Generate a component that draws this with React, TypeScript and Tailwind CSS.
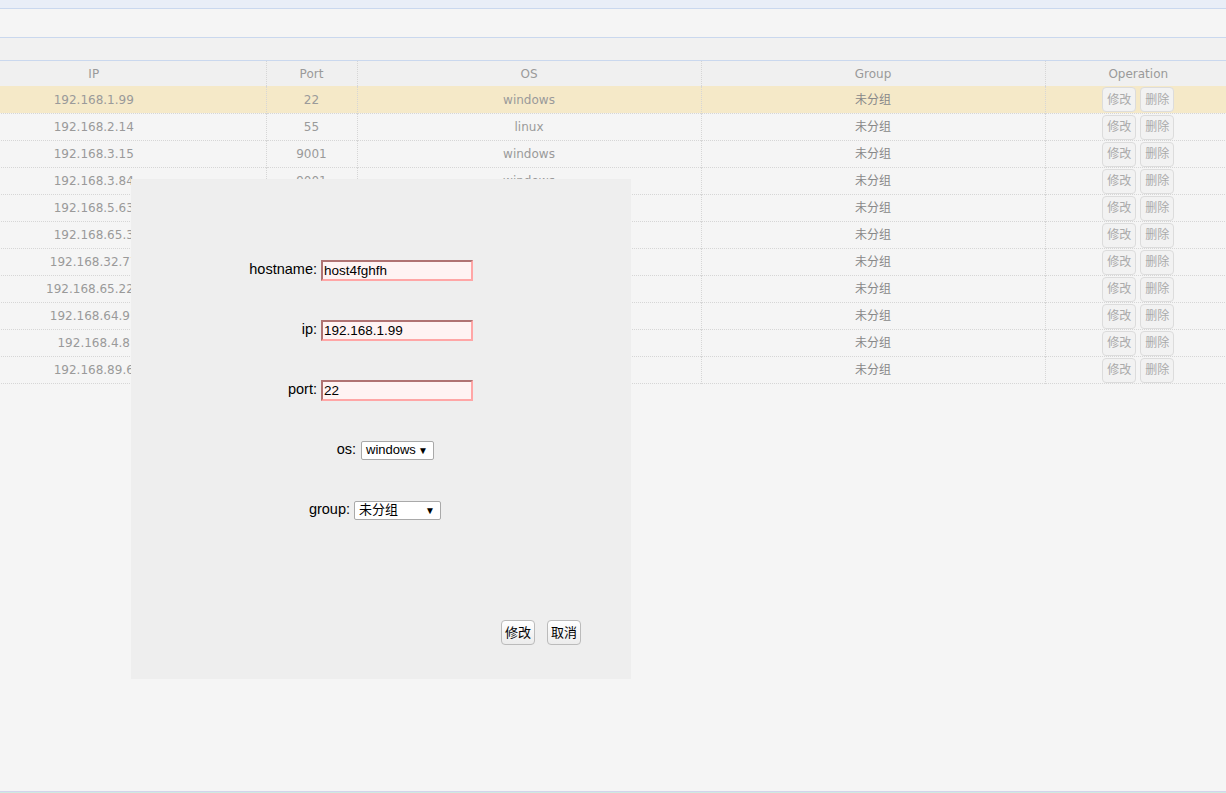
import React from 'react'

const rows = [
  { ip: '192.168.1.99', port: '22', os: 'windows' },
  { ip: '192.168.2.14', port: '55', os: 'linux' },
  { ip: '192.168.3.15', port: '9001', os: 'windows' },
  { ip: '192.168.3.84', port: '9001', os: 'windows' },
  { ip: '192.168.5.63', port: '22', os: 'linux' },
  { ip: '192.168.65.3', port: '22', os: 'linux' },
  { ip: '192.168.32.77', port: '8080', os: 'windows' },
  { ip: '192.168.65.222', port: '22', os: 'linux' },
  { ip: '192.168.64.91', port: '3389', os: 'windows' },
  { ip: '192.168.4.8', port: '22', os: 'linux' },
  { ip: '192.168.89.6', port: '22', os: 'linux' },
]

const cell = 'border-r border-dotted border-[#d6d6d6] text-center align-middle'

function OpButton({ label }: { label: string }) {
  return (
    <button className="h-[25px] w-[34px] rounded-[4px] border border-[#dcdcdc] bg-[#f2f2f2] text-[12px] text-[#aaaaaa]">
      {label}
    </button>
  )
}

function Field({ label, value }: { label: string; value: string }) {
  return (
    <div className="flex h-[60px] items-center">
      <span className="w-[190px] pr-[4px] text-right text-[14.5px] text-black">{label}</span>
      <input
        readOnly
        value={value}
        className="h-[21px] w-[152px] border-2 border-t-[#b07373] border-l-[#b07373] border-b-[#ffa6a6] border-r-[#ffa6a6] bg-[#fff3f3] px-[1px] text-[13.5px] text-black outline-none"
      />
    </div>
  )
}

function Select({ value, w }: { value: string; w: string }) {
  return (
    <div className={`relative flex h-[19px] ${w} items-center rounded-[2px] border border-[#a9a9a9] bg-white pl-[4px] text-[13px] text-black`}>
      <span>{value}</span>
      <span className="absolute right-[5px] top-[1px] text-[10px]">▼</span>
    </div>
  )
}

export default function App() {
  return (
    <div className="relative flex h-[793px] w-[1226px] flex-col overflow-hidden bg-[#f5f5f5] font-['DejaVu_Sans','Noto_Sans_CJK_SC',sans-serif]">
      <div className="h-[9px] border-b border-[#cad8ee] bg-[#e9eef7]" />
      <div className="h-[29px] border-b border-[#cad8ee] bg-[#f5f5f5]" />
      <div className="h-[23px] border-b border-[#cad8ee] bg-[#f1f1f1]" />

      <table className="ml-[-78px] w-[1309px] min-w-[1309px] table-fixed border-collapse text-[12px] text-[#9a9a9a]">
        <colgroup>
          <col className="w-[344px]" />
          <col className="w-[91px]" />
          <col className="w-[344px]" />
          <col className="w-[344px]" />
          <col className="w-[186px]" />
        </colgroup>
        <thead>
          <tr className="h-[25px] bg-[#f0f0f0]">
            <th className={`${cell} font-normal`}>IP</th>
            <th className={`${cell} font-normal`}>Port</th>
            <th className={`${cell} font-normal`}>OS</th>
            <th className={`${cell} font-normal`}>Group</th>
            <th className="text-center font-normal">Operation</th>
          </tr>
        </thead>
        <tbody>
          {rows.map((r, i) => (
            <tr
              key={i}
              className={`h-[27px] border-b border-dotted border-[#d6d6d6] ${i === 0 ? 'bg-[#f5e9c8]' : ''}`}
            >
              <td className={`${cell} pt-[1px]`}>{r.ip}</td>
              <td className={`${cell} pt-[1px]`}>{r.port}</td>
              <td className={`${cell} pt-[1px]`}>{r.os}</td>
              <td className={`${cell} pt-[1px] text-[#888888]`}>未分组</td>
              <td className="align-top pt-[1px]">
                <div className="flex justify-center gap-[4px]">
                  <OpButton label="修改" />
                  <OpButton label="删除" />
                </div>
              </td>
            </tr>
          ))}
        </tbody>
      </table>

      <div className="flex-1" />
      <div className="h-[2px] border-t border-[#d4d4ec] bg-[#cfeae2]" />

      <div className="absolute left-[131px] top-[179px] flex h-[500px] w-[500px] flex-col bg-[#eeeeee] pt-[61px] font-['Liberation_Sans','Noto_Sans_CJK_SC',sans-serif]">
        <Field label="hostname:" value="host4fghfh" />
        <Field label="ip:" value="192.168.1.99" />
        <Field label="port:" value="22" />
        <div className="flex h-[60px] items-center">
          <span className="w-[230px] pr-[5px] text-right text-[14.5px] text-black">os:</span>
          <Select value="windows" w="w-[73px]" />
        </div>
        <div className="flex h-[60px] items-center">
          <span className="w-[223px] pr-[4px] text-right text-[14.5px] text-black">group:</span>
          <Select value="未分组" w="w-[87px]" />
        </div>
        <div className="mt-[80px] flex justify-end gap-[12px] pr-[50px]">
          <button className="h-[25px] w-[34px] rounded-[4px] border border-[#bbbbbb] bg-gradient-to-b from-white to-[#ececec] text-[13px] text-black">
            修改
          </button>
          <button className="h-[25px] w-[34px] rounded-[4px] border border-[#bbbbbb] bg-gradient-to-b from-white to-[#ececec] text-[13px] text-black">
            取消
          </button>
        </div>
      </div>
    </div>
  )
}
